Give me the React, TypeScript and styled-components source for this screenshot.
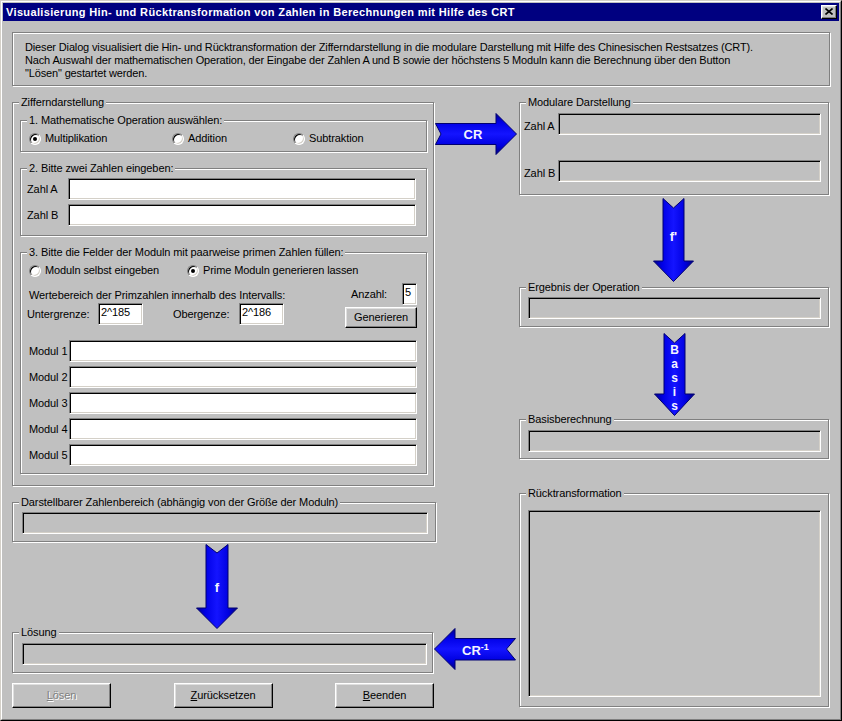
import React from 'react';
import styled, { createGlobalStyle } from 'styled-components';

const GlobalStyle = createGlobalStyle`
  html, body { margin: 0; padding: 0; background: #c0c0c0; }
  body { font-family: "Liberation Sans", Arial, sans-serif; font-size: 11px; color: #000; letter-spacing: -0.1px; }
  * { box-sizing: border-box; }
`;

const Window = styled.div`
  width: 842px;
  height: 721px;
  border: 1px solid;
  border-color: #d4d0c8 #000 #000 #d4d0c8;
  background: #c0c0c0;
`;

const Frame = styled.div`
  height: 100%;
  border: 1px solid;
  border-color: #fff #808080 #808080 #fff;
  padding: 1px;
  display: flex;
  flex-direction: column;
`;

const TitleBar = styled.div`
  height: 18px;
  flex: none;
  background: #000080;
  display: flex;
  align-items: center;
  padding-left: 3px;
`;

const TitleText = styled.div`
  color: #fff;
  font-weight: bold;
  font-size: 11px;
  letter-spacing: 0.35px;
  line-height: 13px;
  white-space: nowrap;
`;

const CloseButton = styled.button`
  margin-left: auto;
  margin-right: 2px;
  width: 16px;
  height: 14px;
  padding: 0 0 1px 0;
  background: #c0c0c0;
  border: 1px solid;
  border-color: #fff #000 #000 #fff;
  box-shadow: inset -1px -1px 0 #808080, inset 1px 1px 0 #dfdfdf;
  display: flex;
  align-items: center;
  justify-content: center;
`;

const Body = styled.div`
  flex: 1;
  padding: 11px 9px 0 9px;
`;

const etched = `
  border: 1px solid #808080;
  box-shadow: inset 1px 1px 0 #fff, 1px 1px 0 #fff;
`;

const Description = styled.div`
  ${etched}
  height: 54px;
  padding: 8px 12px 0 12px;
  line-height: 13px;
  letter-spacing: -0.15px;
`;

const DescLine = styled.div`
  white-space: nowrap;
`;

const MainGrid = styled.div`
  margin-top: 16px;
  display: grid;
  grid-template-columns: 425px 82px 311px;
  align-items: start;
`;

const Column = styled.div`
  display: flex;
  flex-direction: column;
  align-items: flex-start;
`;

const Group = styled.div<{ $w: number; $h?: number; $p: string; $mt?: number }>`
  ${etched}
  position: relative;
  width: ${p => p.$w}px;
  ${p => (p.$h ? `height: ${p.$h}px;` : '')}
  padding: ${p => p.$p};
  margin-top: ${p => p.$mt ?? 0}px;
  flex: none;
`;

const Legend = styled.div`
  position: absolute;
  top: -7px;
  left: 6px;
  padding: 0 2px;
  background: #c0c0c0;
  line-height: 13px;
  white-space: nowrap;
`;

const Field = styled.div<{ $w: number; $h?: number; $white?: boolean }>`
  width: ${p => p.$w}px;
  height: ${p => p.$h ?? 22}px;
  flex: none;
  background: ${p => (p.$white ? '#fff' : '#c0c0c0')};
  border: 1px solid;
  border-color: #808080 #fff #fff #808080;
  box-shadow: inset 1px 1px 0 #000, inset -1px -1px 0 #d4d0c8;
  padding: 2px 2px;
  line-height: 13px;
  white-space: nowrap;
  overflow: hidden;
`;

const Row = styled.div<{ $gap?: number; $mt?: number }>`
  display: flex;
  align-items: center;
  gap: ${p => p.$gap ?? 0}px;
  margin-top: ${p => p.$mt ?? 0}px;
`;

const Label = styled.span<{ $w?: number; $ml?: number; $pt?: number }>`
  ${p => (p.$w ? `width: ${p.$w}px;` : '')}
  margin-left: ${p => p.$ml ?? 0}px;
  padding-top: ${p => p.$pt ?? 0}px;
  flex: none;
  line-height: 13px;
  white-space: nowrap;
`;

const Stack = styled.div<{ $gap?: number; $mt?: number; $pt?: number; $end?: boolean }>`
  display: flex;
  flex-direction: column;
  align-items: ${p => (p.$end ? 'flex-end' : 'flex-start')};
  gap: ${p => p.$gap ?? 0}px;
  margin-top: ${p => p.$mt ?? 0}px;
  padding-top: ${p => p.$pt ?? 0}px;
`;

const Params = styled.div`
  margin-top: 6px;
  display: flex;
  justify-content: space-between;
  align-items: flex-start;
`;

const RadioItem = styled.label<{ $w?: number }>`
  display: inline-flex;
  align-items: center;
  gap: 4px;
  height: 13px;
  ${p => (p.$w ? `width: ${p.$w}px;` : '')}
  flex: none;
  white-space: nowrap;
  line-height: 13px;
`;

const RadioCircle = styled.span<{ $checked?: boolean }>`
  position: relative;
  width: 12px;
  height: 12px;
  flex: none;
  border-radius: 50%;
  border: 1px solid;
  border-color: #808080 #fff #fff #808080;
  background: #fff;
  box-shadow: inset 1px 1px 0 #000, inset -1px -1px 0 #d4d0c8;
  &::after {
    content: '';
    display: ${p => (p.$checked ? 'block' : 'none')};
    position: absolute;
    left: 3px;
    top: 3px;
    width: 4px;
    height: 4px;
    border-radius: 50%;
    background: #000;
  }
`;

const Button = styled.button<{ $w: number; $h?: number; $mt?: number }>`
  width: ${p => p.$w}px;
  height: ${p => p.$h ?? 25}px;
  margin-top: ${p => p.$mt ?? 0}px;
  flex: none;
  background: #c0c0c0;
  border: 1px solid;
  border-color: #fff #000 #000 #fff;
  box-shadow: inset -1px -1px 0 #808080, inset 1px 1px 0 #dfdfdf;
  font-family: "Liberation Sans", Arial, sans-serif;
  font-size: 11px;
  letter-spacing: -0.1px;
  line-height: 13px;
  color: #000;
  padding: 0;
  &:disabled {
    color: #808080;
    text-shadow: 1px 1px 0 #fff;
  }
`;

const Accel = styled.span`
  text-decoration: underline;
`;

const ButtonRow = styled.div`
  width: 422px;
  margin-top: 10px;
  display: flex;
  justify-content: space-between;
`;

const ArrowSvg = styled.svg<{ $ml: number; $mt: number }>`
  display: block;
  flex: none;
  margin-left: ${p => p.$ml}px;
  margin-top: ${p => p.$mt}px;
  overflow: visible;
`;

const ArrowText = styled.text`
  font-family: "Liberation Sans", Arial, sans-serif;
  font-weight: bold;
  letter-spacing: 0;
  fill: #f4f4ff;
`;

function Radio({ label, checked, w }: { label: string; checked?: boolean; w?: number }) {
  return (
    <RadioItem $w={w}>
      <RadioCircle $checked={checked} />
      {label}
    </RadioItem>
  );
}

const HGrad = ({ id }: { id: string }) => (
  <defs>
    <linearGradient id={id} x1="0" y1="0" x2="0" y2="1">
      <stop offset="0" stopColor="#00008c" />
      <stop offset="0.22" stopColor="#0000e6" />
      <stop offset="0.5" stopColor="#1414ff" />
      <stop offset="0.78" stopColor="#0000e0" />
      <stop offset="1" stopColor="#000080" />
    </linearGradient>
  </defs>
);

const VGrad = ({ id }: { id: string }) => (
  <defs>
    <linearGradient id={id} x1="0" y1="0" x2="1" y2="0">
      <stop offset="0" stopColor="#00008c" />
      <stop offset="0.22" stopColor="#0000e6" />
      <stop offset="0.5" stopColor="#1414ff" />
      <stop offset="0.78" stopColor="#0000e0" />
      <stop offset="1" stopColor="#000080" />
    </linearGradient>
  </defs>
);

function RightArrow() {
  return (
    <ArrowSvg $ml={-2} $mt={11} width={82} height={42} viewBox="0 0 82 42">
      <HGrad id="gCR" />
      <polygon
        points="0.5,10.5 61,10.5 61,0.5 81.5,21 61,41.5 61,31.5 0.5,31.5 6,21"
        fill="url(#gCR)"
        stroke="#000070"
        strokeWidth="1"
      />
      <ArrowText x="38" y="25.5" fontSize="13" textAnchor="middle">CR</ArrowText>
    </ArrowSvg>
  );
}

function LeftArrow() {
  return (
    <ArrowSvg $ml={-3} $mt={473} width={82} height={42} viewBox="0 0 82 42">
      <HGrad id="gCRi" />
      <polygon
        points="0.5,21 21,0.5 21,10.5 81.5,10.5 72.5,21 81.5,32 21,32 21,41.5"
        fill="url(#gCRi)"
        stroke="#000070"
        strokeWidth="1"
      />
      <ArrowText x="28" y="27" fontSize="13">
        CR<tspan fontSize="9" dy="-5">-1</tspan>
      </ArrowText>
    </ArrowSvg>
  );
}

function DownArrow({
  id, w, h, hs, n, ml, mt, children,
}: {
  id: string; w: number; h: number; hs: number; n: number; ml: number; mt: number; children: React.ReactNode;
}) {
  const c = w / 2;
  const pts = [
    `10,0.5`, `${c},${n}`, `${w - 10},0.5`, `${w - 10},${hs}`, `${w - 0.5},${hs}`,
    `${c},${h - 0.5}`, `0.5,${hs}`, `10,${hs}`,
  ].join(' ');
  return (
    <ArrowSvg $ml={ml} $mt={mt} width={w} height={h} viewBox={`0 0 ${w} ${h}`}>
      <VGrad id={id} />
      <polygon points={pts} fill={`url(#${id})`} stroke="#000070" strokeWidth="1" />
      {children}
    </ArrowSvg>
  );
}

export default function App() {
  return (
    <>
      <GlobalStyle />
      <Window>
        <Frame>
          <TitleBar>
            <TitleText>
              Visualisierung Hin- und Rücktransformation von Zahlen in Berechnungen mit Hilfe des CRT
            </TitleText>
            <CloseButton aria-label="Schließen">
              <svg width="8" height="7" viewBox="0 0 8 7">
                <path d="M0.5 0.5 L7.5 6.5 M7.5 0.5 L0.5 6.5" stroke="#000" strokeWidth="1.6" fill="none" />
              </svg>
            </CloseButton>
          </TitleBar>
          <Body>
            <Description>
              <DescLine>
                Dieser Dialog visualisiert die Hin- und Rücktransformation der Zifferndarstellung in die modulare Darstellung mit Hilfe des Chinesischen Restsatzes (CRT).
              </DescLine>
              <DescLine>
                Nach Auswahl der mathematischen Operation, der Eingabe der Zahlen A und B sowie der höchstens 5 Moduln kann die Berechnung über den Button
              </DescLine>
              <DescLine>"Lösen" gestartet werden.</DescLine>
            </Description>

            <MainGrid>
              <Column>
                <Group $w={422} $p="17px 0 11px 7px">
                  <Legend>Zifferndarstellung</Legend>

                  <Group $w={407} $p="11px 8px 6px 8px">
                    <Legend>1. Mathematische Operation auswählen:</Legend>
                    <Row>
                      <Radio w={143} checked label="Multiplikation" />
                      <Radio w={121} label="Addition" />
                      <Radio label="Subtraktion" />
                    </Row>
                  </Group>

                  <Group $w={407} $mt={16} $p="9px 10px 9px 6px">
                    <Legend>2. Bitte zwei Zahlen eingeben:</Legend>
                    <Stack $gap={4}>
                      <Row>
                        <Label $w={41}>Zahl A</Label>
                        <Field $w={348} $white />
                      </Row>
                      <Row>
                        <Label $w={41}>Zahl B</Label>
                        <Field $w={348} $white />
                      </Row>
                    </Stack>
                  </Group>

                  <Group $w={407} $mt={16} $p="11px 9px 7px 8px">
                    <Legend>3. Bitte die Felder der Moduln mit paarweise primen Zahlen füllen:</Legend>
                    <Row>
                      <Radio w={158} label="Moduln selbst eingeben" />
                      <Radio checked label="Prime Moduln generieren lassen" />
                    </Row>
                    <Params>
                      <Stack $pt={6}>
                        <Label>Wertebereich der Primzahlen innerhalb des Intervalls:</Label>
                        <Row $mt={1}>
                          <Label $w={71} $ml={-2}>Untergrenze:</Label>
                          <Field $w={45} $white>2^185</Field>
                          <Label $w={66} $ml={30}>Obergenze:</Label>
                          <Field $w={45} $white>2^186</Field>
                        </Row>
                      </Stack>
                      <Stack $end>
                        <Row>
                          <Label $w={51}>Anzahl:</Label>
                          <Field $w={15} $white>5</Field>
                        </Row>
                        <Button $w={72} $h={21} $mt={2}>Generieren</Button>
                      </Stack>
                    </Params>
                    <Stack $gap={4} $mt={12}>
                      {[1, 2, 3, 4, 5].map(i => (
                        <Row key={i}>
                          <Label $w={40}>Modul {i}</Label>
                          <Field $w={348} $white />
                        </Row>
                      ))}
                    </Stack>
                  </Group>
                </Group>

                <Group $w={424} $mt={16} $p="9px 7px 7px 9px">
                  <Legend>Darstellbarer Zahlenbereich (abhängig von der Größe der Moduln)</Legend>
                  <Field $w={406} />
                </Group>

                <DownArrow id="gF" w={42} h={85} hs={64} n={9} ml={184} mt={2}>
                  <ArrowText x="21" y="48" fontSize="13" textAnchor="middle">f</ArrowText>
                </DownArrow>

                <Group $w={421} $mt={3} $p="10px 5px 7px 9px">
                  <Legend>Lösung</Legend>
                  <Field $w={405} />
                </Group>

                <ButtonRow>
                  <Button $w={99} disabled>
                    <Accel>L</Accel>ösen
                  </Button>
                  <Button $w={99}>
                    <Accel>Z</Accel>urücksetzen
                  </Button>
                  <Button $w={99}>
                    <Accel>B</Accel>eenden
                  </Button>
                </ButtonRow>
              </Column>

              <Column>
                <RightArrow />
                <LeftArrow />
              </Column>

              <Column>
                <Group $w={310} $p="10px 7px 12px 4px">
                  <Legend>Modulare Darstellung</Legend>
                  <Stack $gap={25}>
                    <Row>
                      <Label $w={34} $pt={5}>Zahl A</Label>
                      <Field $w={263} />
                    </Row>
                    <Row>
                      <Label $w={34} $pt={4}>Zahl B</Label>
                      <Field $w={263} />
                    </Row>
                  </Stack>
                </Group>

                <DownArrow id="gFp" w={41} h={84} hs={63} n={10} ml={134} mt={3}>
                  <ArrowText x="20.5" y="43" fontSize="13" textAnchor="middle">f'</ArrowText>
                </DownArrow>

                <Group $w={310} $mt={5} $p="9px 7px 7px 8px">
                  <Legend>Ergebnis der Operation</Legend>
                  <Field $w={293} />
                </Group>

                <DownArrow id="gB" w={41} h={83} hs={61} n={10} ml={135} mt={6}>
                  <ArrowText x="20.5" fontSize="12" textAnchor="middle">
                    <tspan x="20.5" y="20.5">B</tspan>
                    <tspan x="20.5" y="35">a</tspan>
                    <tspan x="20.5" y="49">s</tspan>
                    <tspan x="20.5" y="63">i</tspan>
                    <tspan x="20.5" y="76.5">s</tspan>
                  </ArrowText>
                </DownArrow>

                <Group $w={310} $mt={3} $p="10px 7px 6px 8px">
                  <Legend>Basisberechnung</Legend>
                  <Field $w={293} />
                </Group>

                <Group $w={310} $mt={34} $p="16px 7px 9px 8px">
                  <Legend>Rücktransformation</Legend>
                  <Field $w={293} $h={187} />
                </Group>
              </Column>
            </MainGrid>
          </Body>
        </Frame>
      </Window>
    </>
  );
}
